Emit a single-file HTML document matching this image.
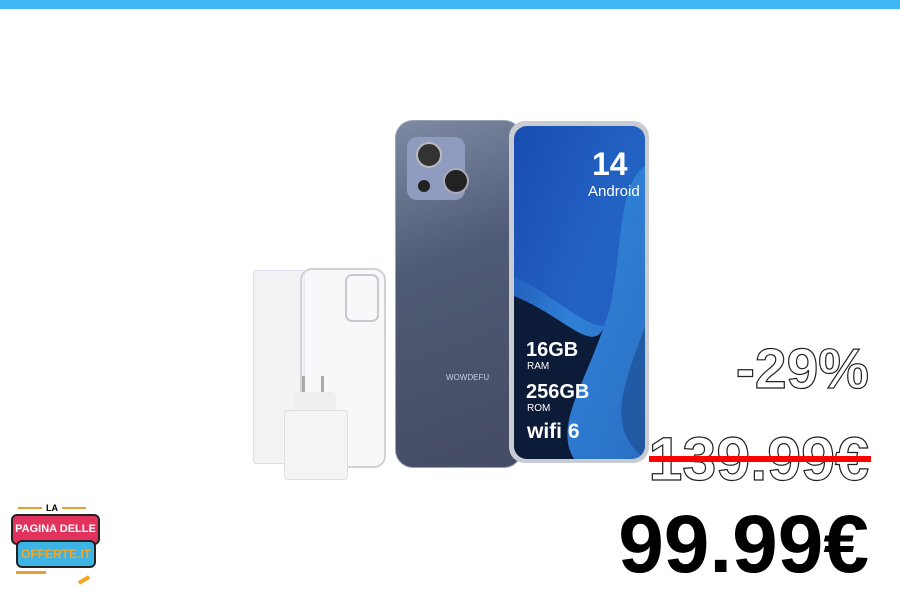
<!DOCTYPE html>
<html><head><style>
body{margin:0;width:900px;height:600px;background:#fff;position:relative;overflow:hidden;font-family:"Liberation Sans",sans-serif}
.a{position:absolute}
.o{color:#fff;-webkit-text-stroke:1.2px #222;font-weight:700;text-align:right;right:31px}
</style></head><body>
<div class="a" style="left:0;top:0;width:900px;height:9px;background:#3fb6f3"></div>

<!-- screen protector -->
<div class="a" style="left:253px;top:270px;width:50px;height:192px;background:#f1f3f4;border:1px solid #dde;border-radius:3px"></div>
<!-- case -->
<div class="a" style="left:300px;top:268px;width:82px;height:196px;border:2px solid #cfd3d8;border-radius:12px;background:rgba(240,242,245,.5)"></div>
<div class="a" style="left:345px;top:274px;width:30px;height:44px;border:2px solid #c6cad0;border-radius:7px"></div>
<!-- charger -->
<div class="a" style="left:302px;top:376px;width:3px;height:20px;background:#aaa"></div>
<div class="a" style="left:321px;top:376px;width:3px;height:20px;background:#aaa"></div>
<div class="a" style="left:294px;top:392px;width:42px;height:22px;background:#eceef0;border-radius:4px"></div>
<div class="a" style="left:284px;top:410px;width:62px;height:68px;background:#f3f4f6;border:1px solid #dcdfe3;border-radius:4px"></div>

<!-- back phone -->
<div class="a" style="left:395px;top:120px;width:125px;height:346px;border-radius:18px;background:linear-gradient(160deg,#7e8aa3,#4f5a74 40%,#434c63);border:1px solid #9aa3b5"></div>
<div class="a" style="left:407px;top:137px;width:58px;height:63px;border-radius:10px;background:#8f9bbf"></div>
<div class="a" style="left:416px;top:142px;width:22px;height:22px;border-radius:50%;background:#333;border:2px solid #bbb"></div>
<div class="a" style="left:443px;top:168px;width:22px;height:22px;border-radius:50%;background:#222;border:2px solid #aab"></div>
<div class="a" style="left:418px;top:180px;width:12px;height:12px;border-radius:50%;background:#222"></div>
<div class="a" style="left:446px;top:373px;color:#ccd;font-size:8px">WOWDEFU</div>

<!-- front phone -->
<div class="a" style="left:509px;top:121px;width:140px;height:342px;border-radius:16px;background:#c9ccd3"></div>
<svg class="a" style="left:514px;top:126px;border-radius:13px" width="131" height="333" viewBox="0 0 131 333">
<defs><linearGradient id="g" x1="0" y1="0" x2="1" y2="1"><stop offset="0" stop-color="#1747a8"/><stop offset=".5" stop-color="#2f80d6"/><stop offset="1" stop-color="#2a6fc4"/></linearGradient></defs>
<rect width="131" height="333" rx="13" fill="url(#g)"/>
<path d="M0 150 C40 170 70 200 90 200 C110 150 100 60 131 40 L131 0 L0 0Z" fill="#1a50b5" opacity=".6"/>
<path d="M0 170 C50 190 80 230 90 200 C70 260 40 300 60 333 L0 333Z" fill="#0c1b38"/>
<path d="M131 200 C110 260 90 300 131 333Z" fill="#1b4a8a" opacity=".6"/>
</svg>
<div class="a" style="left:592px;top:148px;color:#fff;font-weight:700;font-size:32px;line-height:32px">14</div>
<div class="a" style="left:588px;top:183px;color:#fff;font-size:15px">Android</div>
<div class="a" style="left:526px;top:340px;color:#fff;font-weight:700;font-size:20px;line-height:20px">16GB</div>
<div class="a" style="left:527px;top:361px;color:#fff;font-size:10px">RAM</div>
<div class="a" style="left:526px;top:382px;color:#fff;font-weight:700;font-size:20px;line-height:20px">256GB</div>
<div class="a" style="left:527px;top:403px;color:#fff;font-size:10px">ROM</div>
<div class="a" style="left:527px;top:420px;color:#fff;font-weight:700;font-size:21px;line-height:24px">wifi 6</div>

<!-- prices -->
<div class="a o" style="top:338px;font-size:57px;line-height:62px">-29%</div>
<div class="a o" style="top:428px;font-size:61px;line-height:62px">139.99€</div>
<div class="a" style="left:649px;top:456px;width:222px;height:6px;background:#f00"></div>
<div class="a" style="right:31px;top:500px;font-size:82px;font-weight:700;line-height:90px;color:#000">99.99€</div>

<!-- logo -->
<div class="a" style="left:46px;top:503px;font-size:9px;font-weight:700">LA</div>
<div class="a" style="left:18px;top:507px;width:24px;height:2px;background:#e8a030"></div>
<div class="a" style="left:62px;top:507px;width:24px;height:2px;background:#e8a030"></div>
<div class="a" style="left:11px;top:514px;width:85px;height:27px;background:#e2335e;border:2px solid #222;border-radius:6px;color:#fff;font-weight:700;font-size:11px;text-align:center;line-height:27px">PAGINA DELLE</div>
<div class="a" style="left:16px;top:540px;width:76px;height:24px;background:#3db3e6;border:2px solid #222;border-radius:6px;color:#f6a623;font-weight:700;font-size:12px;text-align:center;line-height:24px">OFFERTE.IT</div>
<div class="a" style="left:16px;top:571px;width:30px;height:3px;background:#e8a030"></div>
<div class="a" style="left:78px;top:578px;width:12px;height:4px;background:#f6a623;transform:rotate(-30deg)"></div>
</body></html>
